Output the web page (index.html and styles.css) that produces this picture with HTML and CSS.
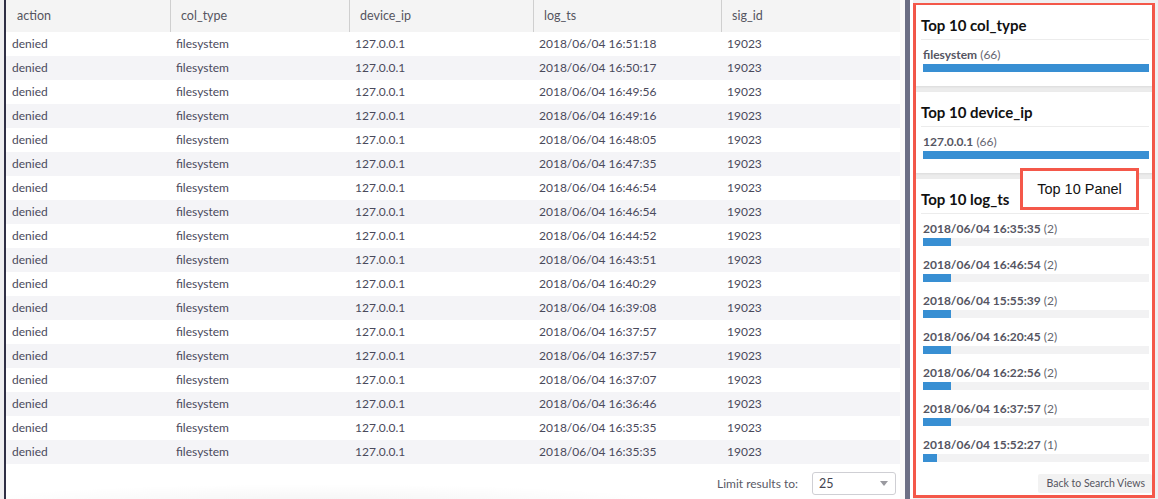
FILE: index.html
```html
<!DOCTYPE html>
<html>
<head>
<meta charset="utf-8">
<link rel="stylesheet" href="styles.css">
</head>
<body>
<div class="app">
  <div class="edge"></div>
  <div class="main">
    <div class="table">
      <div class="thead">
        <div class="th">action</div>
        <div class="th">col_type</div>
        <div class="th">device_ip</div>
        <div class="th">log_ts</div>
        <div class="th">sig_id</div>
      </div>
      <div class="tbody">
        <div class="tr"><div class="td">denied</div><div class="td">filesystem</div><div class="td">127.0.0.1</div><div class="td">2018/06/04 16:51:18</div><div class="td">19023</div></div>
        <div class="tr"><div class="td">denied</div><div class="td">filesystem</div><div class="td">127.0.0.1</div><div class="td">2018/06/04 16:50:17</div><div class="td">19023</div></div>
        <div class="tr"><div class="td">denied</div><div class="td">filesystem</div><div class="td">127.0.0.1</div><div class="td">2018/06/04 16:49:56</div><div class="td">19023</div></div>
        <div class="tr"><div class="td">denied</div><div class="td">filesystem</div><div class="td">127.0.0.1</div><div class="td">2018/06/04 16:49:16</div><div class="td">19023</div></div>
        <div class="tr"><div class="td">denied</div><div class="td">filesystem</div><div class="td">127.0.0.1</div><div class="td">2018/06/04 16:48:05</div><div class="td">19023</div></div>
        <div class="tr"><div class="td">denied</div><div class="td">filesystem</div><div class="td">127.0.0.1</div><div class="td">2018/06/04 16:47:35</div><div class="td">19023</div></div>
        <div class="tr"><div class="td">denied</div><div class="td">filesystem</div><div class="td">127.0.0.1</div><div class="td">2018/06/04 16:46:54</div><div class="td">19023</div></div>
        <div class="tr"><div class="td">denied</div><div class="td">filesystem</div><div class="td">127.0.0.1</div><div class="td">2018/06/04 16:46:54</div><div class="td">19023</div></div>
        <div class="tr"><div class="td">denied</div><div class="td">filesystem</div><div class="td">127.0.0.1</div><div class="td">2018/06/04 16:44:52</div><div class="td">19023</div></div>
        <div class="tr"><div class="td">denied</div><div class="td">filesystem</div><div class="td">127.0.0.1</div><div class="td">2018/06/04 16:43:51</div><div class="td">19023</div></div>
        <div class="tr"><div class="td">denied</div><div class="td">filesystem</div><div class="td">127.0.0.1</div><div class="td">2018/06/04 16:40:29</div><div class="td">19023</div></div>
        <div class="tr"><div class="td">denied</div><div class="td">filesystem</div><div class="td">127.0.0.1</div><div class="td">2018/06/04 16:39:08</div><div class="td">19023</div></div>
        <div class="tr"><div class="td">denied</div><div class="td">filesystem</div><div class="td">127.0.0.1</div><div class="td">2018/06/04 16:37:57</div><div class="td">19023</div></div>
        <div class="tr"><div class="td">denied</div><div class="td">filesystem</div><div class="td">127.0.0.1</div><div class="td">2018/06/04 16:37:57</div><div class="td">19023</div></div>
        <div class="tr"><div class="td">denied</div><div class="td">filesystem</div><div class="td">127.0.0.1</div><div class="td">2018/06/04 16:37:07</div><div class="td">19023</div></div>
        <div class="tr"><div class="td">denied</div><div class="td">filesystem</div><div class="td">127.0.0.1</div><div class="td">2018/06/04 16:36:46</div><div class="td">19023</div></div>
        <div class="tr"><div class="td">denied</div><div class="td">filesystem</div><div class="td">127.0.0.1</div><div class="td">2018/06/04 16:35:35</div><div class="td">19023</div></div>
        <div class="tr"><div class="td">denied</div><div class="td">filesystem</div><div class="td">127.0.0.1</div><div class="td">2018/06/04 16:35:35</div><div class="td">19023</div></div>
      </div>
    </div>
    <div class="footer">
      <span class="limit-label">Limit results to:</span>
      <div class="select"><span>25</span><span class="caret"></span></div>
    </div>
  </div>
  <div class="gutter"></div>
  <div class="divider"></div>
  <div class="gap"></div>
  <div class="side">
    <div class="card">
      <div class="card-title">Top 10 col_type</div>
      <div class="items">
        <div class="item">
          <div class="label"><b>filesystem</b> (66)</div>
          <div class="track"><div class="bar" style="width:100%"></div></div>
        </div>
      </div>
    </div>
    <div class="card">
      <div class="card-title">Top 10 device_ip</div>
      <div class="items">
        <div class="item">
          <div class="label"><b>127.0.0.1</b> (66)</div>
          <div class="track"><div class="bar" style="width:100%"></div></div>
        </div>
      </div>
    </div>
    <div class="card card-last">
      <div class="card-title">Top 10 log_ts</div>
      <div class="items">
        <div class="item"><div class="label"><b>2018/06/04 16:35:35</b> (2)</div><div class="track"><div class="bar" style="width:28px"></div></div></div>
        <div class="item"><div class="label"><b>2018/06/04 16:46:54</b> (2)</div><div class="track"><div class="bar" style="width:28px"></div></div></div>
        <div class="item"><div class="label"><b>2018/06/04 15:55:39</b> (2)</div><div class="track"><div class="bar" style="width:28px"></div></div></div>
        <div class="item"><div class="label"><b>2018/06/04 16:20:45</b> (2)</div><div class="track"><div class="bar" style="width:28px"></div></div></div>
        <div class="item"><div class="label"><b>2018/06/04 16:22:56</b> (2)</div><div class="track"><div class="bar" style="width:28px"></div></div></div>
        <div class="item"><div class="label"><b>2018/06/04 16:37:57</b> (2)</div><div class="track"><div class="bar" style="width:28px"></div></div></div>
        <div class="item"><div class="label"><b>2018/06/04 15:52:27</b> (1)</div><div class="track"><div class="bar" style="width:14px"></div></div></div>
      </div>
      <div class="back-row"><span class="back-btn">Back to Search Views</span></div>
    </div>
    <div class="callout">Top 10 Panel</div>
  </div>
</div>
</body>
</html>
```

FILE: styles.css
```css
* { box-sizing: border-box; }
html, body { margin: 0; padding: 0; }
body {
  width: 1158px;
  height: 499px;
  overflow: hidden;
  background: #efeff1;
  font-family: Lato, "Noto Sans", sans-serif;
}
.app {
  display: flex;
  height: 499px;
}
.edge {
  width: 4px;
  background: #efeff1;
}
.main {
  width: 896px;
  border-left: 2px solid #2f2f45;
  background: #ffffff;
  display: flex;
  flex-direction: column;
}
.thead, .tr {
  display: grid;
  grid-template-columns: 164px 179px 184px 188px 179px;
}
.thead {
  height: 32px;
  background: #f4f4f4;
}
.th {
  font-size: 12.5px;
  color: #555560;
  line-height: 32px;
  padding-left: 10px;
  border-left: 1px solid #cfcfcf;
}
.th:first-child {
  border-left: none;
  padding-left: 11px;
}
.tr {
  height: 24px;
  background: #ffffff;
}
.tr:nth-child(even) {
  background: #f4f4f7;
}
.td {
  font-size: 12px;
  color: #4a4a5c;
  line-height: 24px;
  padding-left: 6px;
  white-space: nowrap;
}
.footer {
  flex: 1;
  display: flex;
  justify-content: flex-end;
  align-items: center;
  gap: 14px;
  padding: 3px 4px 0 0;
  background: radial-gradient(ellipse 60% 90% at 35% 120%, rgba(0,0,0,0.05), rgba(0,0,0,0) 70%), #ffffff;
}
.limit-label {
  font-size: 12px;
  color: #5a5a66;
}
.select {
  width: 84px;
  height: 23px;
  border: 1px solid #cfcfd4;
  border-radius: 3px;
  background: #fff;
  display: flex;
  align-items: center;
  justify-content: space-between;
  padding: 0 7px 0 6px;
  font-size: 12.5px;
  color: #444450;
}
.caret {
  width: 0;
  height: 0;
  border-left: 4.5px solid transparent;
  border-right: 4.5px solid transparent;
  border-top: 5px solid #9a9aa0;
}
.gutter {
  width: 5px;
  background: #fafafa;
}
.divider {
  width: 5px;
  background: #6c6f85;
}
.gap {
  width: 3px;
  background: #ffffff;
}
.side {
  position: relative;
  width: 242px;
  margin-top: 3px;
  height: 495px;
  border: 3px solid #f4584a;
  background: #ececec;
  display: flex;
  flex-direction: column;
  gap: 6px;
  overflow: visible;
}
.card {
  background: #ffffff;
  padding: 11px 3px 14px 5px;
  box-shadow: 0 1px 2px rgba(0,0,0,0.08);
}
.card:first-child {
  margin-top: -1px;
}
.card-title {
  font-size: 15px;
  font-weight: 700;
  color: #111;
  line-height: 18px;
  padding-bottom: 5px;
  border-bottom: 1px solid #ececec;
}
.items {
  display: flex;
  flex-direction: column;
  gap: 12px;
  padding: 8px 0 0 2px;
}
.label {
  font-size: 12px;
  line-height: 14px;
  color: #666670;
  white-space: nowrap;
}
.label b {
  color: #555562;
  font-weight: 700;
}
.track {
  margin-top: 2px;
  height: 8px;
  background: #f2f2f3;
}
.bar {
  height: 8px;
  background: #388fd3;
}
.card-last {
  flex: 1;
  padding-bottom: 0;
  box-shadow: none;
  display: flex;
  flex-direction: column;
}
.back-row {
  display: flex;
  justify-content: flex-end;
  margin-top: 12px;
  margin-right: -3px;
}
.back-btn {
  display: block;
  height: 19px;
  line-height: 19px;
  padding: 0 7px 0 9px;
  background: #f2f2f2;
  border-radius: 2px;
  font-size: 10.5px;
  color: #555560;
}
.callout {
  position: absolute;
  left: 104px;
  top: 162px;
  width: 119px;
  height: 42px;
  border: 3px solid #f4584a;
  background: #ffffff;
  font-family: "Liberation Sans", Arial, sans-serif;
  font-size: 14.5px;
  color: #111;
  display: flex;
  align-items: center;
  justify-content: center;
}
```
